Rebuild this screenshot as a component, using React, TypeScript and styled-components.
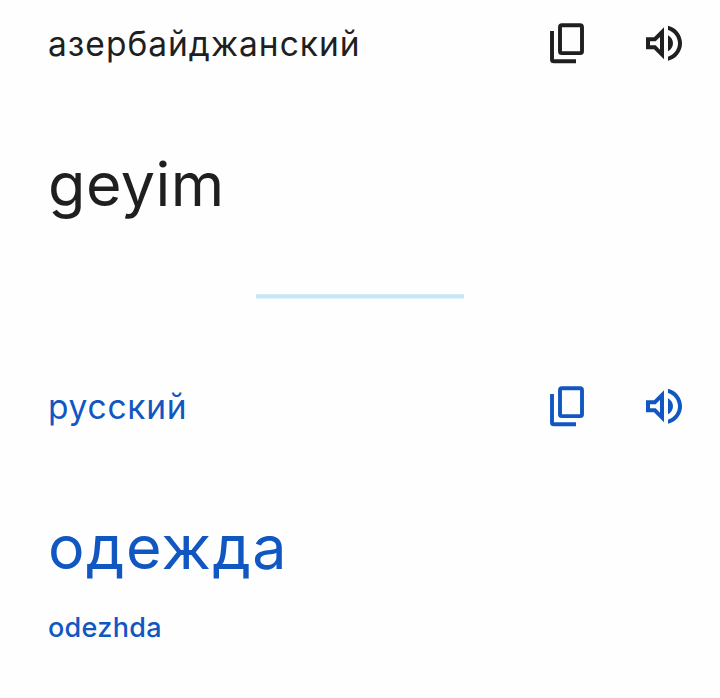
import React from 'react';
import styled, { createGlobalStyle } from 'styled-components';

const Global = createGlobalStyle`
  * { box-sizing: border-box; }
  body { margin: 0; background: #fefefe; font-family: Inter, "Open Sans", sans-serif; }
`;
const Page = styled.main`
  width: 720px;
  height: 698px;
  display: flex;
  flex-direction: column;
  background: #fefefe;
  overflow: hidden;
`;
const Section = styled.section<{ $color: string }>`
  color: ${p => p.$color};
  display: flex;
  flex-direction: column;
`;
const Header = styled.header`
  height: 86px;
  padding: 0 32px 0 48px;
  display: flex;
  align-items: center;
  justify-content: space-between;
`;
const Language = styled.h2<{ $spacing: number }>`
  margin: 0;
  padding-top: 2px;
  font-size: 33.5px;
  line-height: 40px;
  font-weight: 400;
  white-space: nowrap;
  letter-spacing: ${p => p.$spacing}px;
`;
const Actions = styled.div`
  display: flex;
  align-items: center;
  gap: 48px;
`;
const Action = styled.button`
  padding: 0;
  border: 0;
  background: none;
  color: inherit;
  display: flex;
`;
const Icon = styled.svg`
  display: block;
  width: 48px;
  height: 48px;
`;
const Phrase = styled.p<{ $spacing: number }>`
  margin: 58px 0 0 48px;
  font-size: 61px;
  line-height: 80px;
  height: 80px;
  white-space: nowrap;
  letter-spacing: ${p => p.$spacing}px;
`;
const Romanized = styled.p`
  margin: 23px 0 0 48px;
  font-size: 27px;
  line-height: 36px;
  font-weight: 500;
  letter-spacing: .3px;
`;
const Divider = styled.hr`
  width: 208px;
  height: 5px;
  border: 0;
  margin: 70px auto 64px;
  background: linear-gradient(#d4ebfa 0 1px, #c8e6f9 1px 4px, #e5f4fd 4px 5px);
`;

const CopyIcon = () => (
  <Icon viewBox="0 0 48 48" fill="none" stroke="currentColor" strokeWidth="3.9">
    <rect x="16" y="6.3" width="22" height="27.8" rx="1.9" />
    <path d="M8 12v28.4q0 1.9 1.9 1.9H32" />
  </Icon>
);
const SpeakerIcon = () => (
  <Icon viewBox="0 -.15 24 24" fill="currentColor">
    <path d="M3 9v6h4l5 5V4L7 9H3zm7-.17v6.34L7.83 13H5v-2h2.83L10 8.83zM16.5 12c0-1.77-1.02-3.29-2.5-4.03v8.05c1.48-.73 2.5-2.25 2.5-4.02zM14 3.23v2.06c2.89.86 5 3.54 5 6.71s-2.11 5.85-5 6.71v2.06c4.01-.91 7-4.49 7-8.77s-2.99-7.86-7-8.77z" />
  </Icon>
);
const LanguageHeader = ({ name, spacing }: { name: string; spacing: number }) => (
  <Header>
    <Language $spacing={spacing}>{name}</Language>
    <Actions>
      <Action aria-label="Копировать"><CopyIcon /></Action>
      <Action aria-label="Прослушать"><SpeakerIcon /></Action>
    </Actions>
  </Header>
);

export default function App() {
  return (
    <>
      <Global />
      <Page>
        <Section $color="#1f1f1f">
          <LanguageHeader name="азербайджанский" spacing={1} />
          <Phrase $spacing={0.5}>geyim</Phrase>
        </Section>
        <Divider />
        <Section $color="#1157c2">
          <LanguageHeader name="русский" spacing={0.75} />
          <Phrase $spacing={1.5}>одежда</Phrase>
          <Romanized>odezhda</Romanized>
        </Section>
      </Page>
    </>
  );
}
